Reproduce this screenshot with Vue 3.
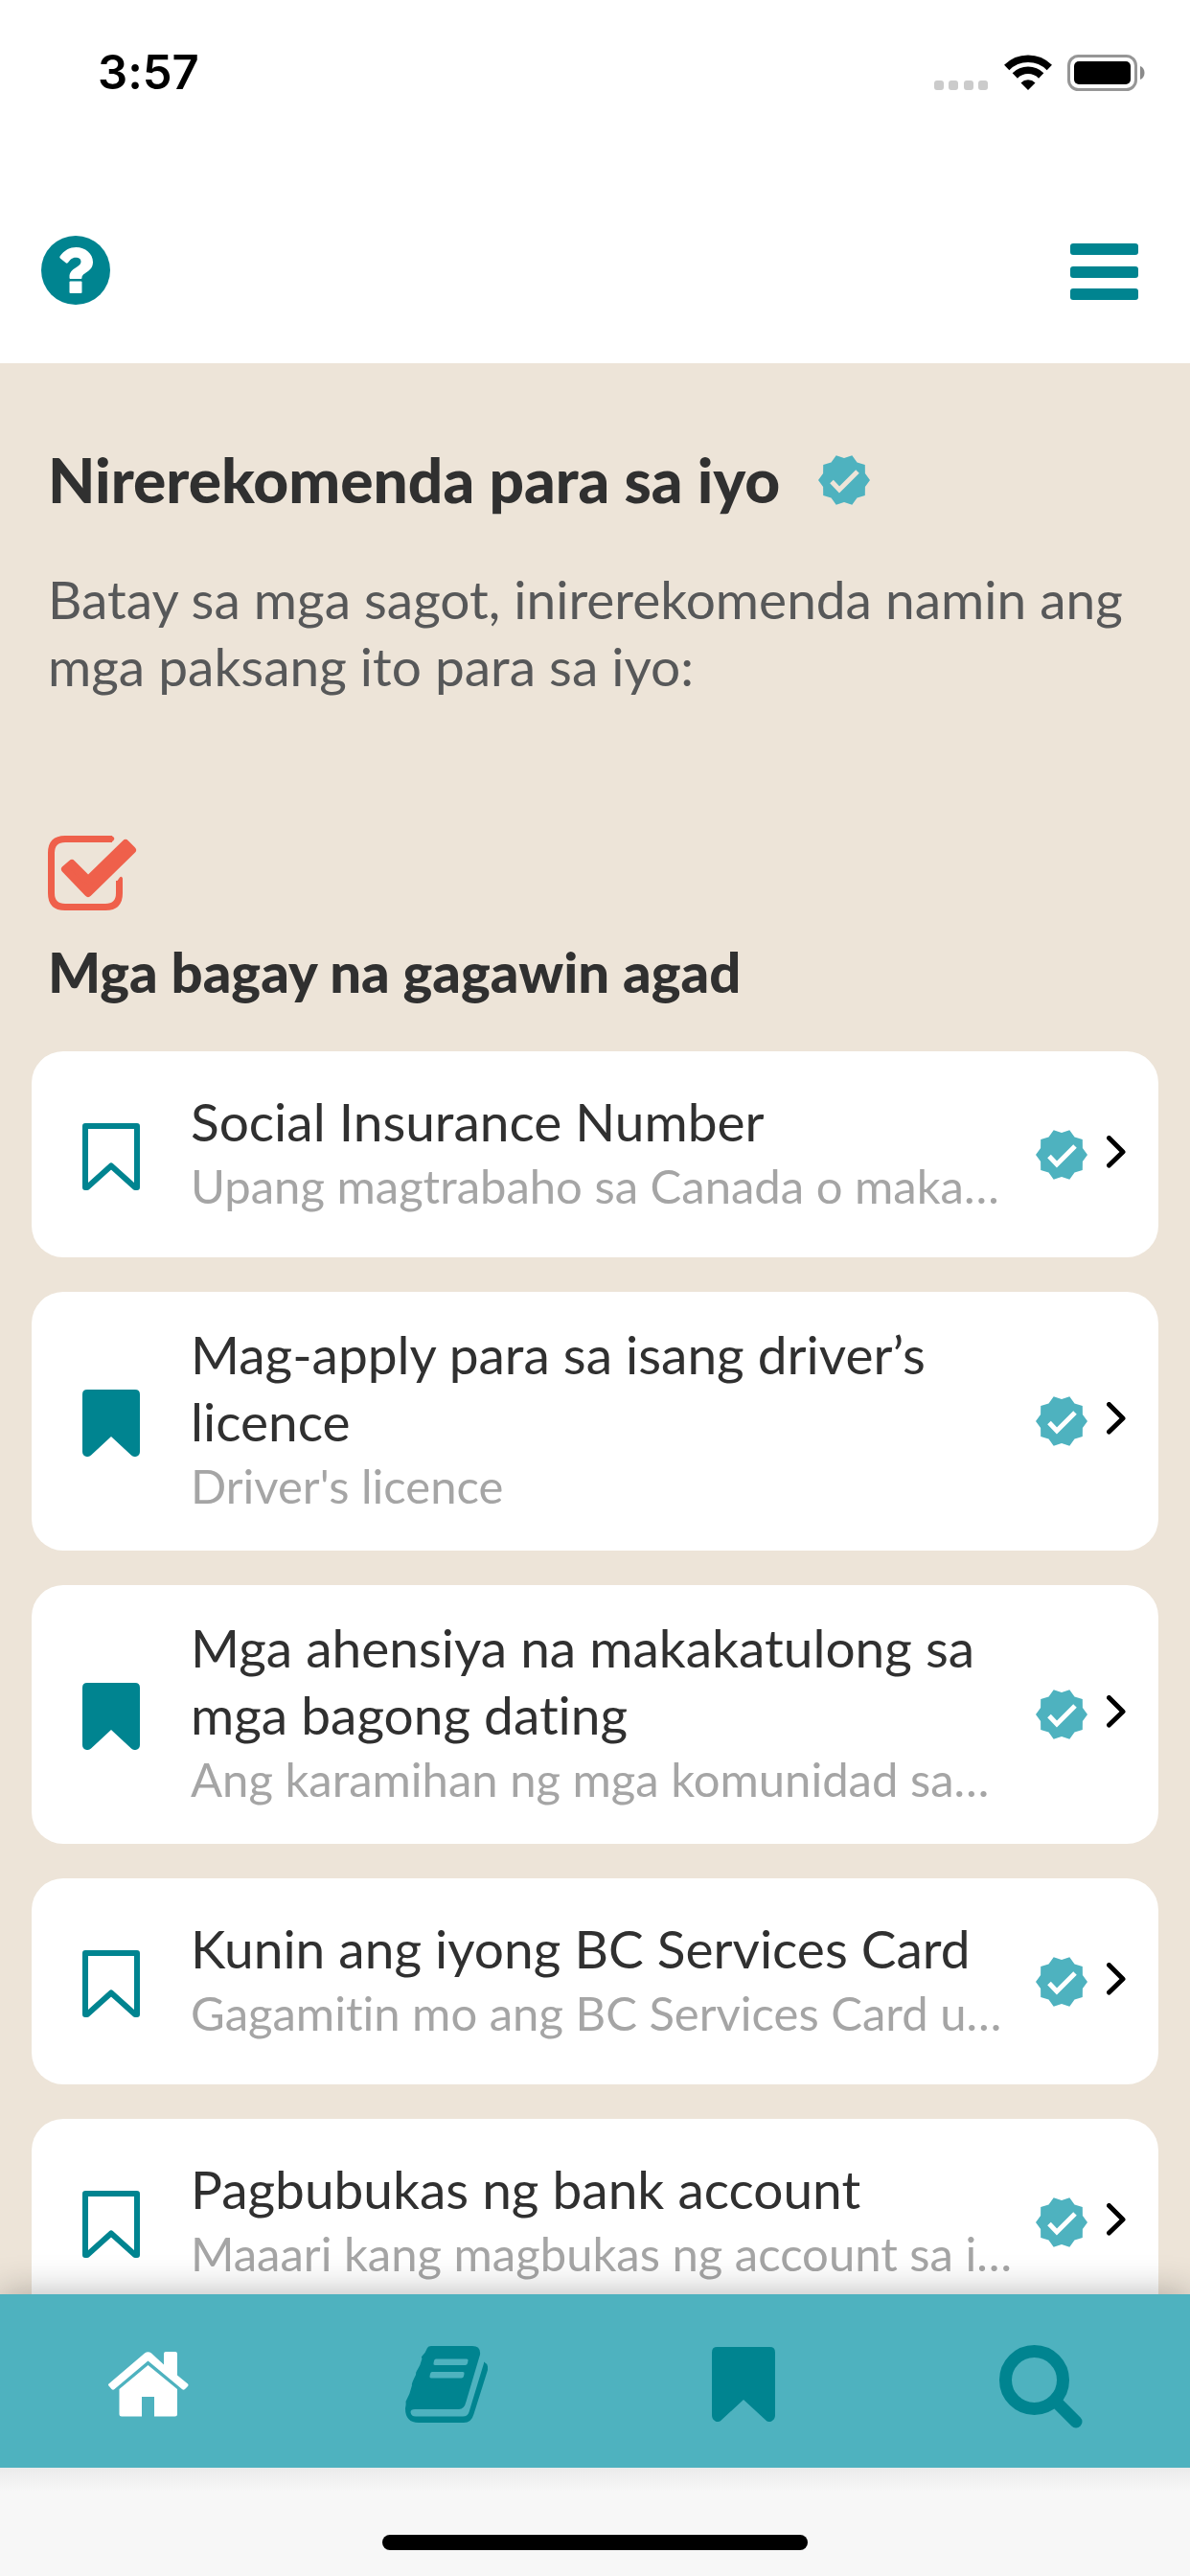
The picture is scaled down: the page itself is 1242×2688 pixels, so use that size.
<script setup>
import { ref, h } from 'vue'

const topics = ref([
  { title: 'Social Insurance Number', summary: 'Upang magtrabaho sa Canada o maka…', saved: false },
  { title: 'Mag-apply para sa isang driver’s licence', summary: "Driver's licence", saved: true },
  { title: 'Mga ahensiya na makakatulong sa mga bagong dating', summary: 'Ang karamihan ng mga komunidad sa…', saved: true },
  { title: 'Kunin ang iyong BC Services Card', summary: 'Gagamitin mo ang BC Services Card u…', saved: false },
  { title: 'Pagbubukas ng bank account', summary: 'Maaari kang magbukas ng account sa i…', saved: false },
])

// Ten-pointed seal used to mark recommended topics
const burst = Array.from({ length: 20 }, (_, i) => {
  const radius = i % 2 ? 23 : 27
  const angle = (i * Math.PI) / 10
  return `${(27 + radius * Math.cos(angle)).toFixed(1)},${(27 + radius * Math.sin(angle)).toFixed(1)}`
}).join(' ')

const VerifiedBadge = (props) =>
  h('svg', { width: 54, height: 54, viewBox: '0 0 54 54', 'aria-hidden': 'true' }, [
    h('polygon', { points: burst, fill: '#4eb2bf' }),
    h('path', { d: 'M14 28.5l8 8.5L41 18', fill: 'none', stroke: props.tick, 'stroke-width': 5 }),
  ])
VerifiedBadge.props = ['tick']
</script>

<template>
  <div class="screen">
    <div class="status">
      <span class="time">3:57</span>
      <div class="indicators">
        <svg width="57" height="38" viewBox="0 0 57 38" fill="#cbcbcb" aria-hidden="true">
          <rect x="0" y="27" width="10" height="10" rx="3" />
          <rect x="15" y="27" width="10" height="10" rx="3" />
          <rect x="31" y="27" width="10" height="10" rx="3" />
          <rect x="46" y="27" width="10" height="10" rx="3" />
        </svg>
        <svg class="wifi" width="50" height="38" viewBox="0 0 50 38" aria-hidden="true">
          <g fill="none" stroke="#000" stroke-width="7.5">
            <path d="M2.7 13.5a31.5 31.5 0 0 1 44.6 0" />
            <path d="M11.3 22a19.4 19.4 0 0 1 27.4 0" />
          </g>
          <path d="M25 37l-7.5-7.6a10.8 10.8 0 0 1 15 0z" />
        </svg>
        <svg width="82" height="38" viewBox="0 0 82 38" aria-hidden="true">
          <rect x="1.5" y="1.5" width="70" height="35" rx="10" fill="none" stroke="#969696" stroke-width="3" />
          <rect x="7" y="7" width="59" height="24" rx="5" />
          <path d="M76 12c6 2 6 12 0 14z" fill="#8a8a8a" />
        </svg>
      </div>
    </div>

    <header class="header">
      <button class="icon-button" type="button" aria-label="Tulong">
        <svg width="72" height="72" viewBox="0 0 72 72">
          <circle cx="36" cy="36" r="36" fill="#008490" />
          <path fill="#fff" d="M19.5 21.5C24 15 30 12 36.500 12C46 12 54 18.500 54 27.500C54 38 42.500 38 42.500 44Q42.500 45 41.500 45H30.500Q29.500 45 29.500 44V43C29.500 33.500 41.500 33 41.500 27C41.500 24 39 22.700 36 22.700C32 22.700 30.300 25 28 28Q27 29 26 28.500L19.800 23.500Q19 22.500 19.500 21.500Z" />
          <rect x="29.500" y="47.500" width="13" height="12.500" rx="1" fill="#fff" />
        </svg>
      </button>
      <button class="icon-button" type="button" aria-label="Menu">
        <svg width="71" height="64" viewBox="0 -4 71 64" fill="#008490">
          <rect y="0" width="71" height="12" rx="3" />
          <rect y="24" width="71" height="12" rx="3" />
          <rect y="47" width="71" height="12" rx="3" />
        </svg>
      </button>
    </header>

    <main class="content">
      <div class="intro">
        <h1>Nirerekomenda para sa iyo <VerifiedBadge tick="#ede4d8" /></h1>
        <p>Batay sa mga sagot, inirerekomenda namin ang mga paksang ito para sa iyo:</p>
        <svg class="task-icon" width="94" height="79" viewBox="0 0 94 79" aria-hidden="true">
          <path d="M67 3.500H18Q3.500 3.500 3.500 18V60Q3.500 74.500 18 74.500H60Q74.500 74.500 74.500 60V47" fill="none" stroke="#ef604b" stroke-width="7" />
          <path d="M66 0Q71 2 68.500 5L66 7zM78 49V44.500Q77 41.500 75 43.500L71 49z" fill="#ef604b" />
          <path d="M18 35L25 29L42 46L81 8L88 15L42 60Z" fill="#ef604b" stroke="#ef604b" stroke-width="8" stroke-linejoin="round" />
        </svg>
        <h2>Mga bagay na gagawin agad</h2>
      </div>

      <ul class="topics">
        <li v-for="topic in topics" :key="topic.title" class="card">
          <button class="icon-button" type="button" aria-label="I-bookmark" :aria-pressed="topic.saved" @click="topic.saved = !topic.saved">
            <svg width="60" height="74" viewBox="0 -4 60 74">
              <path v-if="topic.saved" fill="#008490" d="M5 0H55Q60 0 60 5V65C60 70 54 71.500 51 68.500L30 49L9 68.500C6 71.500 0 70 0 65V5Q0 0 5 0Z" />
              <path v-else fill="none" stroke="#008490" stroke-width="6" stroke-linejoin="round" d="M3 3H57V67H55L30 44.500L5 67H3Z" />
            </svg>
          </button>
          <a class="topic-link" href="#">
            <span class="topic-text">
              <span class="topic-title">{{ topic.title }}</span>
              <span class="topic-summary">{{ topic.summary }}</span>
            </span>
            <VerifiedBadge tick="#fff" />
            <svg class="chevron" width="20" height="40" viewBox="0 0 20 40" fill="none" stroke="#000" stroke-width="5" stroke-linecap="round" stroke-linejoin="round" aria-hidden="true">
              <path d="M2.500 2.500L17 17L2.500 31" />
            </svg>
          </a>
        </li>
      </ul>
    </main>

    <nav class="tabs">
      <a href="#" aria-label="Home" aria-current="page">
        <svg width="84" height="68" viewBox="0 0 84 68" fill="#fff">
          <path d="M38 1.500Q41.500-1 45 1.500L58 13.500V2Q58 0 60 0H70Q72 0 72 2V24.500L83 33.500Q84 34.500 83 36L80 39Q78.500 40.500 77 39L41.500 9.500L6.500 39Q5 40.500 3.500 39L.5 35.500Q-.5 34.500 .5 33.500Z" />
          <path d="M41.500 14L72 39V65Q72 67.500 69.500 67.500H48V47H35V67.500H14Q11.500 67.500 11.500 65V39Z" />
        </svg>
      </a>
      <a href="#" aria-label="Mga gabay">
        <svg width="86" height="80" viewBox="0 0 86 80">
          <path fill="#008490" d="M27 0H70Q79 0 78 9L63.500 58Q61.500 66 56 66H10Q5.500 66 5.500 69Q6 73.500 11 73.500H60Q65 73.500 66.500 69L82 18V16.500Q87 19 86 25L71.500 71Q69 80 61 80H14Q0 80 0 65Q1 61 .5 58Q5 50 7 41Q6 40 11 30Q11 27 12 26Q16 20 17.500 13Q16 12 18 10Q21 7 23 2Q24 0 27 0Z" />
          <path fill="#4eb2bf" d="M32 13.500H64Q66 13.500 65.500 15.500L65 18Q64.500 20 62.500 20H31Q29 20 29.500 18L30 15.500Q30.500 13.500 32 13.500ZM28 27H60Q62 27 61.500 29L61 31.500Q60.500 33.500 58.500 33.500H27Q25 33.500 25.500 31.500L26 29Q26.500 27 28 27Z" />
        </svg>
      </a>
      <a href="#" aria-label="Mga bookmark">
        <svg width="66" height="78" viewBox="0 0 60 71">
          <path fill="#008490" d="M5 0H55Q60 0 60 5V65C60 70 54 73 51 69.500L30 50L9 69.500C6 73 0 70 0 65V5Q0 0 5 0Z" />
        </svg>
      </a>
      <a href="#" aria-label="Maghanap">
        <svg width="87" height="93" viewBox="0 -6 87 93" fill="none" stroke="#008490" stroke-width="13" stroke-linecap="round">
          <circle cx="36.500" cy="36.500" r="30" />
          <path d="M59 59L80 80" />
        </svg>
      </a>
    </nav>
    <footer class="home-area"><div class="home-bar"></div></footer>
  </div>
</template>

<style>
body {
  margin: 0;
}
</style>

<style scoped>
.screen {
  display: flex;
  flex-direction: column;
  height: 100vh;
  background: #ede4d8;
  color: #303030;
  font-family: Lato, "Open Sans", sans-serif;
  font-variant-ligatures: none;
}

svg {
  display: block;
  flex: none;
}

.status {
  display: flex;
  flex: none;
  justify-content: space-between;
  align-items: center;
  height: 152px;
  padding: 0 46px 0 102px;
  background: #fff;
}

.time {
  color: #000;
  font-family: Inter, sans-serif;
  font-size: 49px;
  font-weight: 600;
  line-height: 60px;
}

.indicators {
  display: flex;
  align-items: center;
  gap: 16px;
}

.header {
  display: flex;
  flex: none;
  justify-content: space-between;
  align-items: center;
  height: 195px;
  padding: 32px 54px 0 43px;
  background: #fff;
}

.icon-button {
  flex: none;
  padding: 0;
  border: 0;
  background: none;
  cursor: pointer;
}

.content {
  flex: 1;
  min-height: 0;
  overflow: hidden;
}

.intro {
  padding: 87px 50px 0;
}

h1 {
  display: flex;
  align-items: center;
  gap: 40px;
  margin: 0;
  font-size: 64px;
  font-weight: 900;
  line-height: 70px;
}

p {
  margin: 54px 0 0;
  color: #575859;
  font-size: 55px;
  line-height: 70px;
}

.task-icon {
  margin-top: 142px;
}

h2 {
  margin: 28px 0 0;
  font-size: 58px;
  font-weight: 900;
  line-height: 70px;
}

.topics {
  display: flex;
  flex-direction: column;
  gap: 36px;
  margin: 48px 33px 0;
  padding: 0;
  list-style: none;
}

.card {
  display: flex;
  box-sizing: border-box;
  align-items: center;
  gap: 53px;
  min-height: 215px;
  padding: 30px 34px 30px 53px;
  border-radius: 33px;
  background: #fff;
}

.topic-link {
  display: flex;
  flex: 1;
  align-items: center;
  gap: 20px;
  min-width: 0;
  color: #303030;
  text-decoration: none;
}

.topic-text {
  display: flex;
  flex: 1;
  flex-direction: column;
  min-width: 0;
  padding-bottom: 6px;
}

.topic-title {
  padding-right: 20px;
  font-size: 55px;
  line-height: 70px;
}

.topic-summary {
  color: #a5a5a5;
  font-size: 49px;
  line-height: 64px;
  white-space: nowrap;
}

.tabs {
  position: relative;
  display: grid;
  flex: none;
  grid-template-columns: repeat(4, 1fr);
  height: 181px;
  background: #4eb2bf;
  box-shadow: 0 0 36px rgba(0, 0, 0, 0.3);
}

.tabs a {
  display: flex;
  justify-content: center;
  align-items: center;
  padding-top: 6px;
}

.home-area {
  position: relative;
  display: flex;
  flex: none;
  justify-content: center;
  align-items: flex-end;
  box-sizing: border-box;
  height: 113px;
  padding-bottom: 27px;
  background: linear-gradient(#ebebeb, #f7f7f7 24px);
}

.home-bar {
  width: 444px;
  height: 16px;
  border-radius: 8px;
  background: #000;
}
</style>
